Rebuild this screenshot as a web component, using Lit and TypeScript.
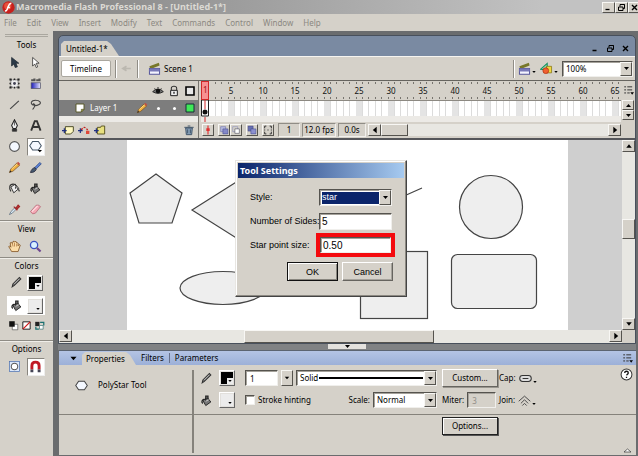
import { LitElement, html, svg, css, TemplateResult } from "lit";
import { customElement, property } from "lit/decorators.js";
import { classMap } from "lit/directives/class-map.js";

const icons: Record<string, TemplateResult> = {
  logo: svg`<circle cx="9" cy="9" r="8.5" fill="#c8201c"/><circle cx="8" cy="7" r="5" fill="#e8503c"/><path d="M13 3c-4 0-4 5-6 9c-1 2-2 2-3 2M7 9h4" fill="none" stroke="#fff" stroke-width="2"/>`,
  arrow: svg`<path d="M5 2v12l3-3l2 5l3-1l-2-5h4z" fill="#2c3a48" stroke="#1c2630"/>`,
  subarrow: svg`<path d="M5 2v12l3-3l2 5l2-1l-2-5h4z" fill="#fff" stroke="#222"/>`,
  transform: svg`<rect x="4" y="4" width="10" height="10" fill="#eee" stroke="#333" stroke-dasharray="2 1"/><path d="M2 2h3v3h-3zM13 2h3v3h-3zM2 13h3v3h-3zM13 13h3v3h-3zM8 2h2v2h-2zM8 14h2v2h-2zM2 8h2v2h-2zM14 8h2v2h-2z" fill="#222"/><circle cx="9" cy="9" r="2" fill="#445"/>`,
  gradient: svg`<defs><linearGradient id="g"><stop offset="0" stop-color="#1a1ab8"/><stop offset="1" stop-color="#e8e8ff"/></linearGradient></defs><rect x="3" y="8" width="13" height="8" fill="url(#g)" stroke="#556"/><path d="M3 3h3v-1h3v4h-6zM10 3h3v-1h3v4h-6z" fill="#555"/>`,
  line: svg`<path d="M3 15L15 4" stroke="#444" stroke-width="1.6"/>`,
  lasso: svg`<path d="M6 10C1 8 3 3 9 3s9 4 5 6s-7 2-8 0s3-1 2 2s-2 3-3 5" fill="none" stroke="#444" stroke-width="1.5"/>`,
  pen: svg`<path d="M9 1l4 8l-2 4h-4l-2-4z" fill="#eee" stroke="#222" stroke-width="1.4"/><path d="M9 3v6M6 14h6v3h-6z" stroke="#333" fill="#333"/>`,
  text: svg`<path d="M3 16L8 3h3l5 13M6 11h7" fill="none" stroke="#333" stroke-width="2.6"/>`,
  oval: svg`<circle cx="9" cy="9" r="6.8" fill="#f4f8ff" stroke="#555" stroke-width="1.5"/>`,
  poly: svg`<path d="M5 3h8l4 6l-4 6h-8l-4-6z" fill="#f4f8ff" stroke="#444" stroke-width="1.4"/>`,
  polytool: svg`<path d="M5 2h8l4 6l-4 6h-8l-4-6z" fill="#f4f8ff" stroke="#456" stroke-width="1.4"/><path d="M12 14h6l-3 3z" fill="#000"/>`,
  pencil: svg`<path d="M2 16l2-5l8-8l4 3l-9 8z" fill="#f0b040" stroke="#775020"/><path d="M12 3l2-2l3 3l-2 2z" fill="#c05040"/><path d="M5 11l8-7" stroke="#ffe9a0"/><path d="M2 16l1-3l2 2z" fill="#222"/>`,
  brush: svg`<path d="M8 9l7-7l2 2l-7 7z" fill="#5a80d8" stroke="#24407c"/><path d="M2 16c1-4 3-6 6-7l2 3c-2 3-4 4-8 4z" fill="#45586e" stroke="#223"/>`,
  ink: svg`<path d="M4 7l6-4l5 6l-7 6z" fill="#eee" stroke="#333" stroke-width="1.3"/><path d="M4 13C1 8 2 3 7 3s5 4 3 6" fill="none" stroke="#333" stroke-width="1.6"/><path d="M13 8l3 5" stroke="#555" stroke-width="2"/>`,
  bucket: svg`<path d="M4 9l6-4l5 6l-7 5z" fill="#777" stroke="#222" stroke-width="1.3"/><path d="M4 13c-2-1-2-5 2-6M8 9v-6h3v4" fill="none" stroke="#222" stroke-width="1.8"/><path d="M8 10l4-2" stroke="#eee"/>`,
  dropper: svg`<path d="M2 16l2-4l6-6l2 2l-6 6z" fill="#d8e8f4" stroke="#567"/><path d="M8 5l5 5M11 7l3-4l2 2l-4 4z" stroke="#a02828" stroke-width="1.6" fill="#c83838"/>`,
  eraser: svg`<path d="M2 12l8-9q3-1 6 2l-7 9q-4 3-7-2z" fill="#f4a8b4" stroke="#b06070"/><path d="M4 12l8-8" stroke="#ffe0e4" stroke-width="1.6"/>`,
  hand: svg`<path d="M5 16L1 9q1-2 3 1l-1-6q2-2 3 1l1-3q2-1 2 1l1-1q2 0 2 2l1 0q2 0 1 3l0 1q2-3 3-1l-3 9z" fill="#fbdca8" stroke="#805020" stroke-width="1.1"/><path d="M6 5l1 4M9 4v5M12 5v4" stroke="#a87038"/>`,
  zoom: svg`<circle cx="7" cy="7" r="5" fill="#d8f0ff" stroke="#3850c0" stroke-width="1.8"/><path d="M11 11l5 5" stroke="#704890" stroke-width="3"/>`,
  stroke: svg`<path d="M3 15l1-4l9-9l2 2l-9 9z" fill="#777" stroke="#333" stroke-width="1.4"/><path d="M6 11l7-7" stroke="#ddd"/>`,
  bw: svg`<path d="M7 7h9v9h-9z" fill="#fff" stroke="#444"/><path d="M2 2h9v9h-9z" fill="#111"/>`,
  none: svg`<path d="M3 3h12v12h-12z" fill="#fff" stroke="#222" stroke-width="1.6"/><path d="M3 15L15 3" stroke="#d01818" stroke-width="2"/>`,
  swap: svg`<path d="M2 3h7v7h-7z" fill="#222"/><path d="M9 9h6v6h-6z" fill="#fff" stroke="#266"/><path d="M10 4h6v5M8 15h-5v-4" fill="none" stroke="#187070" stroke-width="2"/>`,
  objdraw: svg`<rect x="2" y="2" width="14" height="14" fill="#dce8fa" stroke="#4c70b0"/><circle cx="9" cy="9" r="4.5" fill="#fff" stroke="#555" stroke-width="1.4"/>`,
  magnet: svg`<path d="M4 13V8q0-5 5-5t5 5v5" fill="none" stroke="#c01824" stroke-width="4"/><path d="M2 13h4v4h-4zM12 13h4v4h-4z" fill="#445"/>`,
  clapper: svg`<path d="M2 6l13-5l1 4l-13 5z" fill="#77772a"/><path d="M2 9h14v8h-14z" fill="#f4f4ff" stroke="#55559a" stroke-width="1.4"/><path d="M2 9h14v4h-14z" fill="#7878b8"/>`,
  symbols: svg`<path d="M1 10L10 2v9z" fill="#90d8b0" stroke="#109060" stroke-width="1.4"/><path d="M9 6h7v9h-7z" fill="#f0d840" stroke="#807010"/><circle cx="8" cy="12" r="4" fill="#f06030" stroke="#b03010"/>`,
  eye: svg`<path d="M1 10q8-8 16 0q-8 5-16 0zM4 5l1 2M9 3v2M14 5l-1 2" fill="#777" stroke="#222" stroke-width="1.4"/><circle cx="9" cy="9" r="3.4" fill="#111"/>`,
  lock: svg`<path d="M5 8V5q0-3 4-3t4 3v3" fill="none" stroke="#333" stroke-width="1.6"/><path d="M4 8h10v8h-10z" fill="#eee" stroke="#222" stroke-width="1.5"/><path d="M8 10h2v3h-2z" fill="#222"/>`,
  square: svg`<path d="M3 3h12v12h-12z" fill="#e8e8e8" stroke="#000" stroke-width="2.4"/>`,
  green: svg`<path d="M3 3h12v12h-12z" fill="#40e858" stroke="#123" stroke-width="1.4"/>`,
  page: svg`<path d="M3 3h12v8l-4 4h-8z" fill="#fff" stroke="#555522" stroke-width="1.4"/><path d="M15 11h-4v4z" fill="#aaa850" stroke="#555522"/>`,
  addlayer: svg`<path d="M5 4h12v7l-4 4h-8z" fill="#fff8c0" stroke="#444420" stroke-width="1.4"/><path d="M0 10h7M3.500 6.500v7" stroke="#203080" stroke-width="1.8"/>`,
  guide: svg`<path d="M5 9q5-9 11 3" fill="none" stroke="#c02020" stroke-width="2" stroke-dasharray="3 2"/><path d="M0 10h7M3.500 6.500v7" stroke="#203080" stroke-width="1.8"/><path d="M12 10h5v5h-5z" fill="#e04838"/>`,
  folder: svg`<path d="M5 5h5l1-2h5v12h-11z" fill="#e8e080" stroke="#55501c" stroke-width="1.4"/><path d="M0 10h7M3.500 6.500v7" stroke="#203080" stroke-width="1.8"/>`,
  trash: svg`<path d="M4 6h10l-1 10h-8z" fill="#88a0b8" stroke="#3c5064" stroke-width="1.4"/><path d="M2 5h14M7 3h4M7 8v6M11 8v6" stroke="#3c5064" stroke-width="1.4"/>`,
  playhead: svg`<path d="M9 1v16" stroke="#e03030" stroke-width="2"/><path d="M6 6h6v5h-6z" fill="#e03030"/>`,
  onion: svg`<path d="M3 3h9v9h-9z" fill="#b8bce0" stroke="#6468a8"/><path d="M7 7h9v9h-9z" fill="#8488c8" stroke="#44488c"/>`,
  onionline: svg`<path d="M3 3h9v9h-9z" fill="none" stroke="#8488b8"/><path d="M7 7h8v8h-8z" fill="#fff" stroke="#445"/>`,
  multi: svg`<path d="M2 2h9v9h-9z" fill="#6870b0" stroke="#44488c"/><path d="M7 7h9v9h-9z" fill="#8c90d0" stroke="#44488c"/>`,
  markers: svg`<path d="M6 2h-3v4M3 12v4h3M12 2h3v4M15 12v4h-3" fill="none" stroke="#333" stroke-width="1.8"/><path d="M8 8h2v2h-2zM2 8h2v2h-2zM14 8h2v2h-2z" fill="#333"/>`,
  menu: svg`<path d="M2 3h3M7 3h8M2 8h3M7 8h8M2 13h3M7 13h4" stroke="#333" stroke-width="1.6"/><path d="M12 12h6l-3 4z" fill="#000"/>`,
  cap: svg`<rect x="1" y="5" width="16" height="8" rx="4" fill="#ddd" stroke="#333" stroke-width="1.4"/><path d="M5 9h8" stroke="#333" stroke-width="1.4"/>`,
  join: svg`<path d="M1 10L9 3l8 7M4 13l5-5l5 5M6 16l3-3l3 3" fill="none" stroke="#444" stroke-width="1.3"/>`,
  help: svg`<circle cx="9" cy="9" r="7.500" fill="#fff" stroke="#333" stroke-width="1.4"/><path d="M6.500 7q0-2.500 2.500-2.500t2.500 2.500q0 1-2.500 3M9 12v2" fill="none" stroke="#111" stroke-width="1.8"/>`,
  min: svg`<path d="M3 13h8" stroke="#000" stroke-width="2.600"/>`,
  restore: svg`<path d="M6 7V3h9v8h-3M6 3h9" fill="none" stroke="#000" stroke-width="2"/><path d="M3 8h9v7h-9z" fill="none" stroke="#000" stroke-width="2"/>`,
  close: svg`<path d="M4 4l10 10M14 4L4 14" stroke="#000" stroke-width="2.800"/>`,
  up: svg`<path d="M4 12h10l-5-6z"/>`,
  down: svg`<path d="M4 6h10l-5 6z"/>`,
  left: svg`<path d="M12 3v12l-7-6z"/>`,
  right: svg`<path d="M6 3v12l7-6z"/>`,
  back: svg`<path d="M4 9h11M9 6l-5 3l5 3" fill="none" stroke="#bbb8b0" stroke-width="2.400"/>`,
  collapse: svg`<path d="M2 12l7-6l7 6z" fill="#fff" stroke="#333" stroke-width="1.4"/>`,
};

@customElement("ui-icon")
export class UiIcon extends LitElement {
  @property() name = "";
  static styles = css`
    :host { display: inline-block; width: 13px; height: 13px; flex: none; }
    svg { display: block; width: 100%; height: 100%; }
  `;
  render() {
    return html`<svg viewBox="0 0 18 18" aria-hidden="true">${icons[this.name]}</svg>`;
  }
}

const FRAME = 6.4;
const TOOLS = ["arrow", "subarrow", "transform", "gradient", "line", "lasso", "pen", "text", "oval", "polytool", "pencil", "brush", "ink", "bucket", "dropper", "eraser"];
const MENUS = ["File", "Edit", "View", "Insert", "Modify", "Text", "Commands", "Control", "Window", "Help"];

@customElement("app-root")
export class AppRoot extends LitElement {
  static styles = css`
    :host {
      display: flex; flex-direction: column; min-height: 100vh; position: relative;
      font: 8px/12px "Noto Sans", "Open Sans", sans-serif; color: #000; background: #d5d1c9;
      overflow: hidden;
    }
    * { box-sizing: border-box; }
    button, input, select { font: inherit; color: inherit; margin: 0; padding: 0; border: 0; border-radius: 0; background: none; appearance: none; min-width: 0; }
    button { display: flex; align-items: center; justify-content: center; white-space: nowrap; }
    .raised { background: #d5d1c9; border: 1px solid; border-color: #f8f7f4 #55534e #55534e #f8f7f4; }
    .sunk { background: #fff; border: 1px solid; border-color: #55534e #f0efec #f0efec #55534e; box-shadow: inset 1px 1px #a5a29b; }

    .title { display: flex; align-items: center; height: 14px; padding: 0 2px; gap: 1px; background: linear-gradient(90deg, #808080, #c2c2c2 85%); color: #dcdad4; font-weight: 700; }
    .title .name { flex: 1; font-size: 9px; white-space: nowrap; }
    .winbtns { display: flex; margin-right: -5px; }
    .winbtns button { width: 13px; height: 11px; }
    .winbtns ui-icon { width: 9px; height: 9px; }
    .menus { display: flex; height: 17px; align-items: center; gap: 10px; padding: 0 4px; color: #8b8881; }

    .main { display: flex; flex: 1; }
    .tools { width: 53px; flex: none; display: flex; flex-direction: column; padding-top: 3px; }
    .grip { height: 3px; margin: 0 5px; border: 1px solid #aaa79f; border-width: 1px 0; }
    .tools h2 { margin: 0; font: inherit; text-align: center; height: 14px; line-height: 14px; }
    .tools section { padding-top: 1px; border-bottom: 1px solid #8f8c85; box-shadow: 0 1px #f0eee9; }
    .tools section:last-child { border: 0; box-shadow: none; }
    .toolgrid { display: grid; grid-template-columns: 21px 21px; padding-left: 4px; grid-auto-rows: 21px; align-items: center; justify-items: center; }
    .toolgrid button { width: 18px; height: 18px; }
    .toolgrid .on { background: #fff; border: 1px solid; border-color: #88857e #eee #eee #88857e; }
    .paint { display: flex; height: 19px; margin: 0 8px 4px 7px; align-items: center; gap: 4px; padding-left: 3px; }
    .paint.on { background: #fff; }
    .mini { display: flex; gap: 2px; padding: 1px 0 9px 8px; }
    .mini ui-icon { width: 11px; height: 11px; }
    .swatch { width: 16px; height: 16px; padding: 1px; border: 1px solid; border-color: #fff #666 #666 #fff; background: #e2e0dc; justify-content: flex-start; align-items: stretch; }
    .swatch span { flex: 1; display: flex; align-items: flex-end; justify-content: flex-end; background: #ececec; }
    .swatch.black span { background: #000; }
    .swatch ui-icon { width: 6px; height: 6px; background: #ececec; }

    .desk { flex: 1; min-width: 0; display: flex; flex-direction: column; background: #6a6c6e; padding: 4px 2px 1px 5px; }
    .doc { border: 1px solid #48505c; border-radius: 5px 5px 0 0; background: #7a8aa2; overflow: hidden; }
    .tabs { display: flex; height: 20px; align-items: flex-end; padding-left: 2px; }
    .doctab { width: 58px; height: 15px; background: #d5d1c9; justify-content: flex-start; padding-left: 5px; clip-path: polygon(0 3px, 3px 0, 46px 0, 50px 3px, 58px 100%, 0 100%); }
    .tabs .winbtns { margin: 0 3px 2px auto; gap: 2px; }
    .bar { display: flex; align-items: center; height: 24px; background: #d5d1c9; border-top: 1px solid #f6f4f0; padding: 0 2px; white-space: nowrap; }
    .timeline { width: 50px; height: 17px; background: #fff; border: 1px solid #aaa79f; border-radius: 2px; }
    .rule { width: 1px; height: 18px; background: #908d86; margin: 0 4px; box-shadow: 1px 0 #fff; }
    .scene { display: flex; align-items: center; gap: 3px; padding-left: 6px; flex: 1; }
    .drop { display: flex; align-items: flex-end; margin-right: 3px; }
    .drop ui-icon + ui-icon { width: 6px; height: 6px; }
    .zoomsel { width: 71px; }

    .combo { display: grid; align-items: stretch; height: 16px; }
    .combo > * { grid-area: 1 / 1; }
    .combo select { width: 100%; padding: 0 14px 0 3px; }
    .combo .arrowbox { justify-self: end; width: 12px; margin: 1px; display: grid; place-items: center; pointer-events: none; }
    .arrowbox ui-icon { width: 9px; height: 9px; }

    .tl { display: grid; grid-template-columns: 140px 1fr 14px; background: #d5d1c9; border-top: 1px solid #66645f; border-bottom: 2px solid #55565a; }
    .layers { border-right: 1px solid #77746e; display: flex; flex-direction: column; }
    .lhead, .layer, .lfoot { display: flex; align-items: center; gap: 4px; padding: 0 2px; }
    .lhead { height: 19px; justify-content: flex-end; }
    .lhead ui-icon, .layer ui-icon { width: 12px; height: 12px; }
    .layer { height: 16px; background: #7d7d7d; color: #fff; padding-left: 15px; }
    .layer .lname { flex: 1; }
    .dot { width: 12px; display: grid; place-items: center; }
    .dot::after { content: ""; width: 3px; height: 3px; background: #fff; border-radius: 50%; }
    .gap { height: 6px; background: #eceae6; }
    .lfoot { height: 16px; gap: 2px; }
    .lfoot ui-icon { width: 14px; height: 12px; }
    .lfoot .grow { flex: 1; }
    .frames { min-width: 0; padding-left: 2px; }
    .frames svg { display: block; width: 100%; height: 41px; }
    .status { display: flex; align-items: center; height: 16px; background: #d5d1c9; padding-left: 1px; }
    .ob { width: 12px; height: 12px; margin-right: 4px; flex: none; }
    .ob.tight { margin-right: 0; }
    .ob ui-icon { width: 10px; height: 10px; }
    .status output { height: 14px; line-height: 12px; text-align: center; border: 1px solid; border-color: #908d86 #f2f0ec #f2f0ec #908d86; margin-right: 2px; white-space: nowrap; flex: none; }
    .w22 { width: 22px; } .w34 { width: 34px; } .w28 { width: 28px; }
    .side { display: flex; flex-direction: column; align-items: center; }
    .side .opt { height: 19px; display: grid; place-items: center; }
    .side button { width: 12px; height: 10px; }
    .side ui-icon { width: 9px; height: 9px; }
    .side .opt ui-icon { width: 11px; height: 11px; }

    .hbar { display: flex; height: 13px; background: #e8e7e2; }
    .hbar button, .vbar button { width: 13px; height: 12px; flex: none; }
    .hbar ui-icon, .vbar ui-icon { width: 10px; height: 10px; }
    .hbar.small { flex: 1; height: 12px; }
    .hbar.small .thumb { width: 27px; }
    .hbar.small .track { flex: 1; }
    .stage { display: flex; background: #cfcfcf; }
    .canvas { flex: 1; min-width: 0; height: 190px; display: block; }
    .vbar { width: 13px; display: flex; flex-direction: column; background: #e8e7e2; }
    .vbar .t { flex: 137; } .vbar .thumb { height: 20px; } .vbar .b { flex: 160; }
    .hbar .l { flex: 173; } .hbar .m { flex: 190; } .hbar .r { flex: 176; }
    .corner { width: 13px; background: #d5d1c9; }
    .splitter { height: 6px; display: flex; justify-content: center; background: #808284; }
    .splitter button { width: 38px; height: 5px; background: #e4e2de; }
    .splitter ui-icon { width: 9px; height: 9px; }

    .props { flex: 1; margin-left: 1px; background: #d5d1c9; display: flex; flex-direction: column; border-top: 1px solid #5c6470; }
    .phead { display: flex; height: 14px; align-items: center; background: linear-gradient(#b4c4e4, #9cb0d8); padding: 0 3px 0 9px; }
    .phead ui-icon { width: 11px; height: 11px; }
    .ptab { width: 54px; height: 13px; align-self: flex-end; background: #d5d1c9; justify-content: flex-start; padding-left: 4px; margin: 0 0 0 3px; clip-path: polygon(0 3px, 3px 0, 44px 0, 48px 3px, 100% 100%, 0 100%); }
    .plink { padding: 0 5px; }
    .phead .sep { width: 1px; height: 10px; background: #66708a; }
    .phead .grow { flex: 1; }
    .pbody { display: grid; grid-template-columns: 135px 1fr; flex: 1; grid-template-rows: 49px 1fr; }
    .pbody > .l { border-right: 2px solid #85827b; margin-top: 5px; display: flex; gap: 10px; padding: 9px 0 0 16px; }
    .pbody > .l.b { margin: 0 0 2px; padding: 0; }
    .pbody > .r, .pbody > .l.b { border-top: 1px solid #85827b; }
    .pbody > .r.top { border: 0; }
    .pgrid { display: grid; grid-template-columns: 16px 23px 192px 56px auto 1fr; column-gap: 3px; row-gap: 2px; grid-auto-rows: 20px; padding: 3px 3px 0 6px; align-items: center; }
    .pgrid .big, .pgrid .mrow { margin-left: 2px; }
    .row { display: flex; align-items: center; gap: 3px; white-space: nowrap; }
    .row > .num, .row > .miter { height: 16px; padding-left: 4px; }
    .num { width: 33px; }
    .stepper { width: 12px; height: 16px; flex: none; }
    .stepper ui-icon { width: 8px; height: 8px; }
    .stroke { flex: 1; }
    .stroke .solid { align-self: center; height: 2px; background: #000; margin: 0 14px 0 23px; pointer-events: none; }
    .row > .check { width: 10px; height: 10px; flex: none; }
    .scale { width: 64px; } .row .push { margin-left: auto; }
    .big { height: 18px; width: 56px; border-color: #fff #66645f #66645f #fff; box-shadow: 1px 1px #99968f; }
    .big.def { border: 1px solid #222; box-shadow: inset 1px 1px #fff, 1px 1px #555; margin: 2px 0 0 248px; }
    .miter { flex: 1; background: #d5d1c9; color: #918e87; }
    .pgrid .help { justify-self: end; align-self: start; }
    .end { display: flex; align-items: flex-start; justify-content: space-between; padding-right: 4px; }
    .end > ui-icon { align-self: flex-end; width: 9px; height: 9px; }

    .dialog { position: absolute; left: 235px; top: 160px; width: 172px; height: 137px; padding: 2px; background: #d5d1c9; border: 1px solid; border-color: #e8e6e2 #444 #444 #e8e6e2; box-shadow: inset -1px -1px #8c8982, inset 1px 1px #fff; font-family: "Liberation Sans", Arial, sans-serif; font-size: 9px; }
    .dtitle { margin: 0; height: 15px; padding-left: 2px; font: 700 9px/15px "Noto Sans", sans-serif; color: #fff; background: linear-gradient(90deg, #0a246a, #a6caf0); }
    .form { display: grid; grid-template-columns: 66px 79px; grid-auto-rows: 24px; padding: 7px 0 0 12px; align-items: center; white-space: nowrap; }
    .form input, .form .combo { margin: 0 3px; height: 17px; }
    .form input { padding-left: 2px; font-size: 10px; }
    .form select { background: #0a246a; color: #fff; border-width: 1px; box-shadow: inset 1px 1px #a5a29b, inset -1px -1px #fff, inset 2px 2px #fff; padding-left: 2px; }
    .mark { border: 4px solid #f40a0e; height: 24px; display: flex; }
    .form .mark input { margin: 0; flex: 1; height: 16px; }
    .dbtns { display: flex; gap: 4px; padding: 5px 0 0 49px; }
    .dbtns button { width: 51px; height: 19px; border-color: #fff #66645f #66645f #fff; box-shadow: inset -1px -1px #a5a29b; }
    .dbtns .ok { border: 1px solid #111; box-shadow: inset 1px 1px #fff, inset -1px -1px #88857e; }
  `;

  private ruler() {
    const cx = (i: number) => FRAME * i - 2;
    const all = Array.from({ length: 65 }, (_, i) => i + 1);
    return html`<svg role="img" aria-label="Frames">
      <rect y="19" width="100%" height="22" fill="#eceae6"/>
      <rect y="20" width="100%" height="15" fill="#fff"/>
      <path d="M0 19.500H440" stroke="#8c8982"/>
      ${all.map((i) => svg`
        ${i % 5 === 0 ? svg`<rect x=${cx(i) - 3} y="20" width="6" height="15" fill="#e4e4e4"/>
          <text x=${cx(i)} y="13" text-anchor="middle" font-size="8" fill="#111">${i}</text>` : ""}
        <path d="M${Math.round(cx(i) + 3)}.5 1v2m0 13v2" stroke="#77746e"/>
        <path d="M${Math.round(cx(i) + 3)}.5 20v15" stroke="#dcdcdc"/>`)}
      <rect x="0.500" y="0.500" width="7" height="18" fill="#f89090" stroke="#d02828"/>
      <text x="2" y="12" font-size="8" fill="#a01010">1</text>
      <path d="M0.500 19v16h7v-16" fill="none" stroke="#222"/>
      <circle cx="4" cy="31" r="2.500" fill="#111"/>
      <path d="M4 19v9M4 36v5" stroke="#d02828"/>
    </svg>`;
  }

  private canvas() {
    return html`<svg class="canvas" role="img" aria-label="Stage">
      <rect x="68" width="441" height="190" fill="#fff"/>
      <g fill="#eee" stroke="#444" stroke-width="1.200">
        <path d="M97 34L123 53L113 83H80L71 53z"/>
        <path d="M190 34L133 70L190 106z"/>
        <ellipse cx="164" cy="148" rx="43" ry="16.500"/>
        <path d="M225 20.500H328M345 56L363 48" fill="none"/>
        <rect x="301.500" y="111.500" width="67" height="67"/>
        <circle cx="432" cy="67" r="31.500"/>
        <rect x="392.500" y="114.500" width="85" height="54" rx="6"/>
      </g></svg>`;
  }

  private win(cls: string) {
    return html`<div class="winbtns">${["min", "restore", "close"].map((n) => html`<button class=${cls} aria-label=${n}><ui-icon name=${n}></ui-icon></button>`)}</div>`;
  }

  private arrowBox() {
    return html`<span class="arrowbox raised"><ui-icon name="down"></ui-icon></span>`;
  }

  private swatch(black: boolean, label: string) {
    return html`<button class=${classMap({ swatch: true, black })} aria-label=${label}><span><ui-icon name="down"></ui-icon></span></button>`;
  }

  private scroll(name: string) {
    return html`<button class="raised" aria-label=${`Scroll ${name}`}><ui-icon name=${name}></ui-icon></button>`;
  }

  private frameButton(name: string, label: string, tight = false) {
    return html`<button class=${classMap({ ob: true, raised: true, tight })} aria-label=${label}><ui-icon name=${name}></ui-icon></button>`;
  }

  render() {
    return html`
      <header class="title"><ui-icon name="logo"></ui-icon><span class="name">Macromedia Flash Professional 8 - [Untitled-1*]</span>${this.win("raised")}</header>
      <nav class="menus">${MENUS.map((m) => html`<button>${m}</button>`)}</nav>
      <div class="main">
        <aside class="tools">
          <div class="grip"></div>
          <section><h2>Tools</h2>
            <div class="toolgrid">${TOOLS.map((t) => html`<button class=${classMap({ on: t === "polytool" })} aria-label=${t}><ui-icon name=${t}></ui-icon></button>`)}</div></section>
          <section><h2>View</h2>
            <div class="toolgrid"><button aria-label="hand"><ui-icon name="hand"></ui-icon></button><button aria-label="zoom"><ui-icon name="zoom"></ui-icon></button></div></section>
          <section><h2>Colors</h2>
            <div class="paint"><ui-icon name="stroke"></ui-icon>${this.swatch(true, "Stroke color")}</div>
            <div class="paint on"><ui-icon name="bucket"></ui-icon>${this.swatch(false, "Fill color")}</div>
            <div class="mini"><ui-icon name="bw"></ui-icon><ui-icon name="none"></ui-icon><ui-icon name="swap"></ui-icon></div></section>
          <section><h2>Options</h2>
            <div class="toolgrid"><button aria-label="Object drawing"><ui-icon name="objdraw"></ui-icon></button><button class="on" aria-label="Snap to objects"><ui-icon name="magnet"></ui-icon></button></div></section>
        </aside>
        <div class="desk">
          <section class="doc">
            <div class="tabs"><button class="doctab">Untitled-1*</button>${this.win("")}</div>
            <div class="bar">
              <button class="timeline">Timeline</button><span class="rule"></span>
              <ui-icon name="back"></ui-icon><span class="rule"></span>
              <span class="scene"><ui-icon name="clapper"></ui-icon><span>Scene 1</span></span>
              <span class="rule"></span>
              <span class="drop"><ui-icon name="clapper"></ui-icon><ui-icon name="down"></ui-icon></span>
              <span class="drop"><ui-icon name="symbols"></ui-icon><ui-icon name="down"></ui-icon></span>
              <span class="combo zoomsel"><select class="sunk" aria-label="Zoom"><option>100%</option></select>${this.arrowBox()}</span>
            </div>
            <div class="tl">
              <div class="layers">
                <div class="lhead"><ui-icon name="eye"></ui-icon><ui-icon name="lock"></ui-icon><ui-icon name="square"></ui-icon></div>
                <div class="layer"><ui-icon name="page"></ui-icon><span class="lname">Layer 1</span><ui-icon name="pencil"></ui-icon><span class="dot"></span><span class="dot"></span><ui-icon name="green"></ui-icon></div>
                <div class="gap"></div>
                <div class="lfoot"><ui-icon name="addlayer"></ui-icon><ui-icon name="guide"></ui-icon><ui-icon name="folder"></ui-icon><span class="grow"></span><ui-icon name="trash"></ui-icon></div>
              </div>
              <div class="frames">${this.ruler()}
                <div class="status">
                  ${this.frameButton("playhead", "Center frame")}
                  ${this.frameButton("onion", "Onion skin", true)}
                  ${this.frameButton("onionline", "Onion outlines")}
                  ${this.frameButton("multi", "Edit multiple frames")}
                  ${this.frameButton("markers", "Onion markers")}
                  <output class="w22">1</output><output class="w34">12.0 fps</output><output class="w28">0.0s</output>
                  <div class="hbar small">${this.scroll("left")}<span class="thumb raised"></span><span class="track"></span>${this.scroll("right")}</div>
                </div>
              </div>
              <div class="side"><span class="opt"><ui-icon name="menu"></ui-icon></span>${this.scroll("up")}${this.scroll("down")}</div>
            </div>
            <div class="stage">${this.canvas()}
              <div class="vbar">${this.scroll("up")}<span class="t"></span><span class="thumb raised"></span><span class="b"></span>${this.scroll("down")}</div></div>
            <div class="hbar">${this.scroll("left")}<span class="l"></span><span class="m thumb raised"></span><span class="r"></span>${this.scroll("right")}<span class="corner"></span></div>
          </section>
          <div class="splitter"><button aria-label="Collapse panel"><ui-icon name="down"></ui-icon></button></div>
          <section class="props">
            <div class="phead"><ui-icon name="down"></ui-icon><button class="ptab">Properties</button><button class="plink">Filters</button><span class="sep"></span><button class="plink">Parameters</button><span class="grow"></span><ui-icon name="menu"></ui-icon></div>
            <div class="pbody">
              <div class="l"><ui-icon name="poly"></ui-icon><span>PolyStar Tool</span></div>
              <div class="r top pgrid">
                <ui-icon name="stroke"></ui-icon>${this.swatch(true, "Stroke color")}
                <div class="row"><input class="sunk num" aria-label="Stroke height" value="1"><button class="stepper raised" aria-label="Choose height"><ui-icon name="down"></ui-icon></button>
                  <span class="combo stroke"><select class="sunk" aria-label="Stroke style"><option>Solid</option></select><span class="solid"></span>${this.arrowBox()}</span></div>
                <button class="raised big">Custom...</button>
                <div class="row">Cap: <span class="drop"><ui-icon name="cap"></ui-icon><ui-icon name="down"></ui-icon></span></div>
                <ui-icon class="help" name="help"></ui-icon>
                <ui-icon name="bucket"></ui-icon>${this.swatch(false, "Fill color")}
                <div class="row"><input id="hint" type="checkbox" class="sunk check"><label for="hint">Stroke hinting</label>
                  <label class="push" for="scale">Scale:</label><span class="combo scale"><select id="scale" class="sunk"><option>Normal</option></select>${this.arrowBox()}</span></div>
                <div class="row mrow"><label for="miter">Miter:</label><input id="miter" class="sunk miter" value="3" disabled></div>
                <div class="row">Join: <span class="drop"><ui-icon name="join"></ui-icon><ui-icon name="down"></ui-icon></span></div>
              </div>
              <div class="l b"></div>
              <div class="r end"><button class="raised big def">Options...</button><ui-icon name="collapse"></ui-icon></div>
            </div>
          </section>
        </div>
      </div>
      <div class="dialog" role="dialog" aria-labelledby="dt">
        <h1 class="dtitle" id="dt">Tool Settings</h1>
        <div class="form">
          <label for="style">Style:</label><span class="combo"><select id="style" class="sunk"><option>star</option></select>${this.arrowBox()}</span>
          <label for="sides">Number of Sides:</label><input id="sides" class="sunk" value="5">
          <label for="point">Star point size:</label><span class="mark"><input id="point" class="sunk" value="0.50"></span>
        </div>
        <div class="dbtns"><button class="ok raised">OK</button><button class="raised">Cancel</button></div>
      </div>`;
  }
}
